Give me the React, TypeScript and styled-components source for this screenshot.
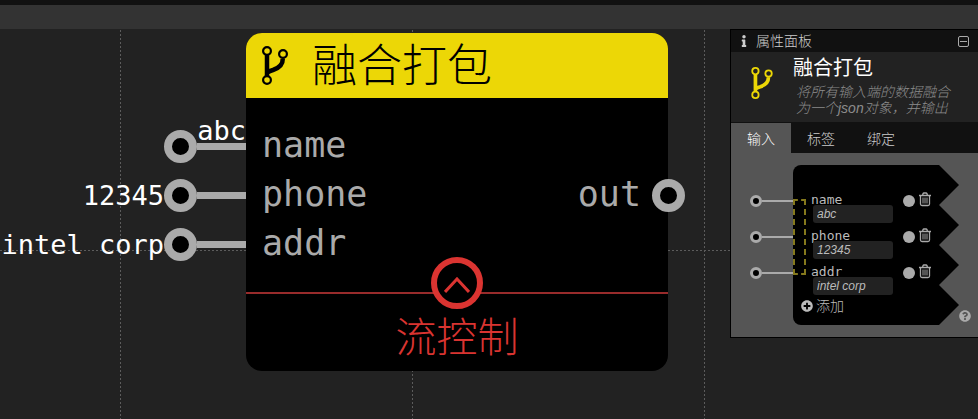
import React from "react";
import styled, { createGlobalStyle } from "styled-components";
import { FaInfo, FaPlusCircle, FaQuestionCircle } from "react-icons/fa";

const SANS = `"Liberation Sans", "Noto Sans CJK SC", sans-serif`;
const MONO = `"DejaVu Sans Mono", "Noto Sans CJK SC", monospace`;

const GlobalStyle = createGlobalStyle`
  *, *::before, *::after { box-sizing: border-box; }
  html, body, #root { height: 100%; }
  body { margin: 0; background: #222; font-family: ${SANS}; overflow: hidden; }
  button, input { font: inherit; color: inherit; border: 0; padding: 0; margin: 0; background: none; }
  button { cursor: pointer; }
  h1, h2, p { margin: 0; font-weight: 300; }
`;

const Editor = styled.div`
  min-height: 100%;
  display: flex;
  flex-direction: column;
`;

const TopStrip = styled.div`
  height: 5px;
  background: #111;
`;

const Toolbar = styled.div`
  height: 24px;
  background: #333;
`;

const Canvas = styled.main`
  position: relative;
  flex: 1;
  background-color: #222;
`;

const GridLines = styled.svg`
  position: absolute;
  inset: 0;
  width: 100%;
  height: 100%;
`;

const Node = styled.section`
  position: absolute;
  left: 246px;
  top: 4px;
  width: 422px;
  border-radius: 16px;
  background: #000;
  color: #aaa;
  font-family: ${MONO};
`;

const NodeHeader = styled.header`
  display: flex;
  align-items: center;
  gap: 24px;
  height: 65px;
  padding-left: 16px;
  border-radius: 16px 16px 0 0;
  background: #ecd706;
  color: #000;
`;

const NodeTitle = styled.h1`
  align-self: flex-start;
  font-size: 45px;
  line-height: 60px;
  font-family: "Noto Sans CJK SC", sans-serif;
`;

const NodeBody = styled.div`
  display: flex;
  justify-content: space-between;
  align-items: center;
  padding: 24px 0;
`;

const PortList = styled.div`
  display: flex;
  flex-direction: column;
`;

const Port = styled.div<{ $side: "in" | "out" }>`
  position: relative;
  height: 49px;
  padding: ${(p) => (p.$side === "in" ? "0 0 0 16px" : "0 27px 0 0")};
  font-size: 35px;
  line-height: 46px;
`;

const Wire = styled.div`
  position: absolute;
  top: 0;
  right: 100%;
  height: 49px;
  display: flex;
  align-items: center;
`;

const OutSocket = styled.div`
  position: absolute;
  top: 8px;
  right: -17px;
`;

const Ring = styled.div`
  width: 33px;
  height: 33px;
  border: 8px solid #aaa;
  border-radius: 50%;
  background: #000;
`;

const Line = styled.div`
  width: 49px;
  height: 7px;
  background: #aaa;
`;

const WireValue = styled.span<{ $above?: boolean }>`
  color: #fff;
  font-size: 27px;
  line-height: 48px;
  white-space: pre;
  ${(p) => p.$above && "position: absolute; right: 0; bottom: 16px;"}
`;

const FlowControl = styled.footer`
  position: relative;
  display: flex;
  justify-content: center;
  height: 79px;
  padding-top: 12px;
  margin-top: -1px;
  border-top: 2px solid #982b2b;
  color: #d93431;
`;

const FlowToggle = styled.button`
  position: absolute;
  top: -37px;
  left: 185px;
  display: grid;
  place-items: center;
  width: 52px;
  height: 52px;
  padding-top: 4px;
  border: 6px solid #db3431;
  border-radius: 50%;
  background: #000;
`;

const FlowLabel = styled.span`
  font: 300 41px/56px "Noto Sans CJK SC", sans-serif;
`;

const Panel = styled.aside`
  position: absolute;
  top: 0;
  right: 0;
  width: 248px;
  border: 1px solid #000;
  border-right: 0;
  color: #ccc;
  font-size: 14px;
  font-weight: 300;
`;

const PanelBar = styled.header`
  display: flex;
  align-items: center;
  height: 22px;
  padding: 0 9px 0 7px;
  gap: 6px;
  background: #111;
  line-height: 22px;
`;

const PanelTitle = styled.h2`
  flex: 1;
  font-size: 14px;
  line-height: 20px;
`;

const CollapseButton = styled.button`
  display: flex;
`;

const Summary = styled.div`
  display: flex;
  height: 71px;
  padding: 0 18px;
  gap: 18px;
  align-items: center;
  background: #222;
  border-bottom: 1px solid #111;
`;

const SummaryIcon = styled.div`
  display: flex;
  padding-bottom: 8px;
  color: #ecd706;
`;

const SummaryText = styled.div`
  align-self: flex-start;
  flex: 1;
`;

const SummaryTitle = styled.h2`
  color: #fff;
  font-size: 20px;
  font-weight: 400;
  line-height: 32px;
`;

const SummaryNote = styled.p`
  width: 164px;
  padding-left: 3px;
  color: #8c8c8c;
  font-size: 14px;
  font-style: italic;
  line-height: 16px;
`;

const Tabs = styled.nav`
  display: flex;
  background: #111;
`;

const Tab = styled.button<{ $active?: boolean }>`
  width: 60px;
  height: 30px;
  color: ${(p) => (p.$active ? "#fff" : "#ccc")};
  background: ${(p) => (p.$active ? "#555" : "transparent")};
`;

const PanelBody = styled.div`
  display: flex;
  align-items: flex-end;
  padding: 12px 7px 12px 62px;
  background: #555;
`;

const Preview = styled.div`
  position: relative;
  width: 166px;
  height: 160px;
  padding: 28px 0 0 18px;
  color: #bbb;

  &::before {
    content: "";
    position: absolute;
    inset: 0;
    border-radius: 8px 0 0 8px;
    background: #000;
    clip-path: polygon(0 0, 146px 0, 166px 20px, 146px 40px, 166px 60px, 146px 80px, 166px 100px, 146px 120px, 166px 140px, 146px 160px, 0 160px);
  }
`;

const MergeBox = styled.div`
  position: absolute;
  left: 0;
  top: 34px;
  width: 13px;
  height: 76px;
  border: 2px dashed #85791c;
`;

const Field = styled.div`
  position: relative;
  height: 36px;
`;

const FieldTop = styled.div`
  display: flex;
  align-items: center;
  height: 16px;
`;

const FieldLabel = styled.label`
  width: 92px;
  height: 16px;
  font: 13px/14px ${MONO};
`;

const FieldInput = styled.input`
  display: block;
  position: relative;
  width: 80px;
  height: 18px;
  margin: -4px 0 0 2px;
  padding: 0 4px;
  border-radius: 3px;
  background: #222;
  font: italic 12px/18px ${SANS};
`;

const Dot = styled.span`
  width: 12px;
  height: 12px;
  border-radius: 50%;
  background: #aaa;
`;

const DeleteButton = styled.button`
  display: flex;
  margin: -4px 0 0 3px;
`;

const MiniWire = styled.div`
  position: absolute;
  top: 2px;
  right: calc(100% + 18px);
  display: flex;
  align-items: center;
`;

const MiniRing = styled.div`
  width: 12px;
  height: 12px;
  border: 3px solid #aaa;
  border-radius: 50%;
  background: #000;
`;

const MiniLine = styled.div`
  width: 31px;
  height: 2px;
  background: #aaa;
`;

const AddButton = styled.button`
  position: relative;
  display: flex;
  align-items: center;
  gap: 3px;
  height: 14px;
  margin-left: -10px;
  margin-top: -2px;
  line-height: 14px;
  font-weight: 300;
`;

const HelpButton = styled.button`
  display: flex;
  margin-bottom: 3px;
  color: #aaa;
`;

const ForkIcon = ({ width, height }: { width: number; height: number }) => (
  <svg width={width} height={height} viewBox="0 0 26 39" fill="none" stroke="currentColor" aria-hidden="true">
    <path d="M5 8.500v21.500M20.800 12.500C21 20 15.500 22.500 11 24Q7.500 25 5.500 26.500" strokeWidth="4.500" />
    <circle cx="5" cy="5" r="3.900" strokeWidth="2.200" />
    <circle cx="21" cy="8" r="3.900" strokeWidth="2.200" />
    <circle cx="5" cy="34" r="3.900" strokeWidth="2.200" />
  </svg>
);

const TrashIcon = () => (
  <svg width="14" height="15" viewBox="0 0 14 15" fill="none" stroke="#aaa" aria-hidden="true">
    <path strokeWidth="1.300" d="M1 3.500h12M4.500 3.500 5 1.800q.2-.8 1-.8h2q.8 0 1 .8l.5 1.700M2.500 3.500v8.500q0 1.500 1.500 1.500h6q1.500 0 1.500-1.500V3.500" />
    <path d="M5 5.500v6M7 5.500v6M9 5.500v6" />
  </svg>
);

const inputs = [
  { name: "name", value: "abc", above: true },
  { name: "phone", value: "12345", above: false },
  { name: "addr", value: "intel corp", above: false },
];

export default function App() {
  return (
    <Editor>
      <GlobalStyle />
      <TopStrip />
      <Toolbar />
      <Canvas>
        <GridLines aria-hidden="true">
          <defs>
            <pattern id="grid" x="120" y="221" width="292" height="292" patternUnits="userSpaceOnUse">
              <path d="M.5 0v292M0 .5h292" stroke="#5c5c5c" strokeDasharray="2 2" />
            </pattern>
          </defs>
          <rect width="100%" height="100%" fill="url(#grid)" />
        </GridLines>
        <Node>
          <NodeHeader>
            <ForkIcon width={26} height={39} />
            <NodeTitle>融合打包</NodeTitle>
          </NodeHeader>
          <NodeBody>
            <PortList>
              {inputs.map((i) => (
                <Port key={i.name} $side="in">
                  <Wire>
                    <WireValue $above={i.above}>{i.value}</WireValue>
                    <Ring />
                    <Line />
                  </Wire>
                  {i.name}
                </Port>
              ))}
            </PortList>
            <Port $side="out">
              out
              <OutSocket>
                <Ring />
              </OutSocket>
            </Port>
          </NodeBody>
          <FlowControl>
            <FlowToggle aria-label="流控制">
              <svg width="26" height="16" viewBox="0 0 26 16" fill="none" stroke="#db3431" strokeWidth="3">
                <path d="M1 15 13 2l12 13" />
              </svg>
            </FlowToggle>
            <FlowLabel>流控制</FlowLabel>
          </FlowControl>
        </Node>

        <Panel>
          <PanelBar>
            <FaInfo size={12} />
            <PanelTitle>属性面板</PanelTitle>
            <CollapseButton aria-label="折叠">
              <svg width="11" height="11" viewBox="0 0 11 11" fill="none" stroke="#aaa">
                <rect x=".5" y=".5" width="10" height="10" rx="1.500" />
                <path d="M2 5.500h7" />
              </svg>
            </CollapseButton>
          </PanelBar>
          <Summary>
            <SummaryIcon>
              <ForkIcon width={26} height={32} />
            </SummaryIcon>
            <SummaryText>
              <SummaryTitle>融合打包</SummaryTitle>
              <SummaryNote>将所有输入端的数据融合为一个json对象，并输出</SummaryNote>
            </SummaryText>
          </Summary>
          <Tabs>
            <Tab $active>输入</Tab>
            <Tab>标签</Tab>
            <Tab>绑定</Tab>
          </Tabs>
          <PanelBody>
            <Preview>
              {inputs.map((i) => (
                <Field key={i.name}>
                  <MiniWire>
                    <MiniRing />
                    <MiniLine />
                  </MiniWire>
                  <FieldTop>
                    <FieldLabel htmlFor={`field-${i.name}`}>{i.name}</FieldLabel>
                    <Dot />
                    <DeleteButton aria-label="删除">
                      <TrashIcon />
                    </DeleteButton>
                  </FieldTop>
                  <FieldInput id={`field-${i.name}`} defaultValue={i.value} />
                </Field>
              ))}
              <MergeBox />
              <AddButton>
                <FaPlusCircle size={12} />
                添加
              </AddButton>
            </Preview>
            <HelpButton aria-label="帮助">
              <FaQuestionCircle size={12} />
            </HelpButton>
          </PanelBody>
        </Panel>
      </Canvas>
    </Editor>
  );
}
